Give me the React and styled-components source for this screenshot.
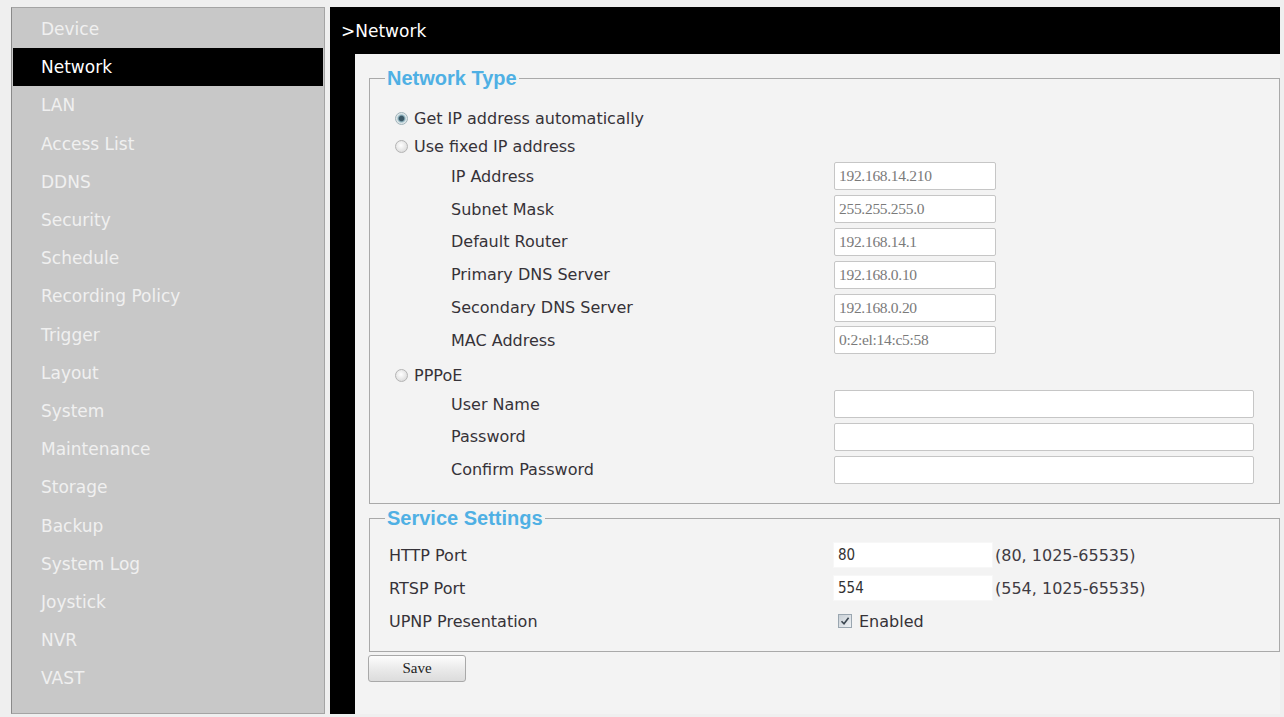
import React from 'react';
import styled, { createGlobalStyle, css } from 'styled-components';

const GlobalStyle = createGlobalStyle`
    html, body {
        margin: 0;
        padding: 0;
        background: #efefef;
    }
    * {
        box-sizing: border-box;
    }
`

const sans = `'DejaVu Sans', Verdana, sans-serif`

const Page = styled.div`
    display: flex;
    height: 717px;
    padding: 7px 4px 3px 11px;
    background: #efefef;
    font-family: ${sans};
`

const Sidebar = styled.nav`
    width: 314px;
    flex-shrink: 0;
    background: #c8c8c8;
    border: 1px solid #a4a4a4;
    border-left-color: #8a8a8a;
    padding: 2px 1px 0;
`

const NavItem = styled.div`
    height: 38.2px;
    display: flex;
    align-items: center;
    padding-left: 28px;
    font-size: 17px;
    color: #f0f0f0;
    ${p => p.$active && css`
        background: #000;
        color: #fff;
    `}
`

const Main = styled.main`
    flex: 1;
    margin-left: 5px;
    display: flex;
    flex-direction: column;
    background: #000;
`

const Header = styled.div`
    height: 47px;
    flex-shrink: 0;
    display: flex;
    align-items: center;
    padding-left: 11px;
    color: #fff;
    font-size: 17px;
`

const Panel = styled.div`
    flex: 1;
    margin-left: 25px;
    background: #f3f3f3;
    padding: 13px 0 0 14px;
    overflow: hidden;
`

const Group = styled.fieldset`
    margin: ${p => p.$top || 0}px 0 0;
    padding: 0 0 ${p => p.$bottom}px;
    border: 1px solid #a9a9a9;
    min-width: 0;
`

const Legend = styled.legend`
    margin-left: 15px;
    padding: 0 2px;
    font-family: 'Liberation Sans', Arial, sans-serif;
    font-weight: bold;
    font-size: 20px;
    line-height: 22px;
    color: #4fb0e4;
`

const Body = styled.div`
    padding-top: ${p => p.$top}px;
`

const RadioRow = styled.label`
    display: flex;
    align-items: center;
    gap: 6px;
    height: ${p => p.$h}px;
    margin-top: ${p => p.$mt || 0}px;
    padding-left: 25px;
    font-size: 16px;
    color: #363238;
`

const Radio = styled.input.attrs({ type: 'radio' })`
    appearance: none;
    margin: 0;
    width: 13px;
    height: 13px;
    border-radius: 50%;
    border: 1px solid #b4b4b4;
    background: radial-gradient(circle at 45% 40%, #ffffff 0, #e4e4e4 60%, #cfcfcf 100%);
    &:checked {
        border-color: #9fb3ba;
        background: radial-gradient(circle, #3c5866 0, #3c5866 2.2px, #8fb4c0 3.4px, #d9e4e7 4.6px, #ececec 6px);
    }
`

const FieldRow = styled.div`
    display: flex;
    align-items: center;
    height: ${p => p.$h || 32.8}px;
    padding-left: ${p => p.$indent}px;
    font-size: 16px;
    color: #363238;
`

const FieldLabel = styled.span`
    width: ${p => p.$w}px;
    flex-shrink: 0;
`

const TextBox = styled.input`
    width: ${p => p.$w}px;
    height: 28px;
    margin: 0;
    padding: 0 4px;
    border: 1px solid #c6c6c6;
    border-radius: 2px;
    background: #fff;
    font-family: 'Liberation Serif', 'Times New Roman', serif;
    font-size: 15.5px;
    letter-spacing: -0.3px;
    color: #7a7a7a;
    outline: none;
`

const PortBox = styled.input`
    width: 160px;
    height: 26px;
    margin: 0;
    padding: 0 4px;
    border: 1px solid #f7f7f7;
    background: #fff;
    font-family: 'Liberation Sans Narrow', 'DejaVu Sans Condensed', 'Liberation Sans', sans-serif;
    font-size: 15px;
    color: #333;
    outline: none;
`

const Hint = styled.span`
    margin-left: 2px;
    font-size: 16px;
    color: #3f3b42;
`

const CheckWrap = styled.label`
    display: flex;
    align-items: center;
    gap: 7px;
    margin-left: 5px;
    font-size: 16px;
    color: #363238;
`

const CheckBox = styled.span`
    width: 14px;
    height: 14px;
    border: 1px solid #9aa6b0;
    background: linear-gradient(135deg, #c9d0d6, #eef1f4);
    display: flex;
    align-items: center;
    justify-content: center;
`

const SaveButton = styled.button`
    margin: 3px 0 0 -1px;
    width: 98px;
    height: 27px;
    border: 1px solid #a9a9a9;
    border-radius: 3px;
    background: linear-gradient(#fdfdfd, #e9e9e9 55%, #dcdcdc);
    font-family: 'Liberation Serif', 'Times New Roman', serif;
    font-size: 15px;
    color: #222;
    padding: 0;
`

const menu = [
    'Device', 'Network', 'LAN', 'Access List', 'DDNS', 'Security', 'Schedule',
    'Recording Policy', 'Trigger', 'Layout', 'System', 'Maintenance', 'Storage',
    'Backup', 'System Log', 'Joystick', 'NVR', 'VAST',
]

const fixedFields = [
    ['IP Address', '192.168.14.210'],
    ['Subnet Mask', '255.255.255.0'],
    ['Default Router', '192.168.14.1'],
    ['Primary DNS Server', '192.168.0.10'],
    ['Secondary DNS Server', '192.168.0.20'],
    ['MAC Address', '0:2:el:14:c5:58'],
]

const pppoeFields = ['User Name', 'Password', 'Confirm Password']

const App = () => {
    return (
        <>
            <GlobalStyle />
            <Page>
                <Sidebar>
                    {menu.map(item => (
                        <NavItem key={item} $active={item === 'Network'}>{item}</NavItem>
                    ))}
                </Sidebar>
                <Main>
                    <Header>&gt;Network</Header>
                    <Panel>
                        <Group $bottom={17}>
                            <Legend>Network Type</Legend>
                            <Body $top={15}>
                                <RadioRow $h={29}>
                                    <Radio name='nettype' defaultChecked />
                                    Get IP address automatically
                                </RadioRow>
                                <RadioRow $h={27}>
                                    <Radio name='nettype' />
                                    Use fixed IP address
                                </RadioRow>
                                {fixedFields.map(([label, value]) => (
                                    <FieldRow key={label} $indent={81}>
                                        <FieldLabel $w={383}>{label}</FieldLabel>
                                        <TextBox $w={162} defaultValue={value} readOnly />
                                    </FieldRow>
                                ))}
                                <RadioRow $h={25} $mt={6}>
                                    <Radio name='nettype' />
                                    PPPoE
                                </RadioRow>
                                {pppoeFields.map(label => (
                                    <FieldRow key={label} $indent={81}>
                                        <FieldLabel $w={383}>{label}</FieldLabel>
                                        <TextBox $w={420} type={label === 'User Name' ? 'text' : 'password'} />
                                    </FieldRow>
                                ))}
                            </Body>
                        </Group>
                        <Group $top={3} $bottom={13}>
                            <Legend>Service Settings</Legend>
                            <Body $top={9.5}>
                                <FieldRow $indent={19} $h={33}>
                                    <FieldLabel $w={444}>HTTP Port</FieldLabel>
                                    <PortBox defaultValue='80' />
                                    <Hint>(80, 1025-65535)</Hint>
                                </FieldRow>
                                <FieldRow $indent={19} $h={33}>
                                    <FieldLabel $w={444}>RTSP Port</FieldLabel>
                                    <PortBox defaultValue='554' />
                                    <Hint>(554, 1025-65535)</Hint>
                                </FieldRow>
                                <FieldRow $indent={19} $h={33}>
                                    <FieldLabel $w={444}>UPNP Presentation</FieldLabel>
                                    <CheckWrap>
                                        <CheckBox>
                                            <svg width='10' height='10' viewBox='0 0 10 10'>
                                                <path d='M1.5 5.2 L4 7.8 L8.6 1.8' fill='none' stroke='#3b4650' strokeWidth='1.6' />
                                            </svg>
                                        </CheckBox>
                                        Enabled
                                    </CheckWrap>
                                </FieldRow>
                            </Body>
                        </Group>
                        <SaveButton type='button'>Save</SaveButton>
                    </Panel>
                </Main>
            </Page>
        </>
    );
}

export default App;
